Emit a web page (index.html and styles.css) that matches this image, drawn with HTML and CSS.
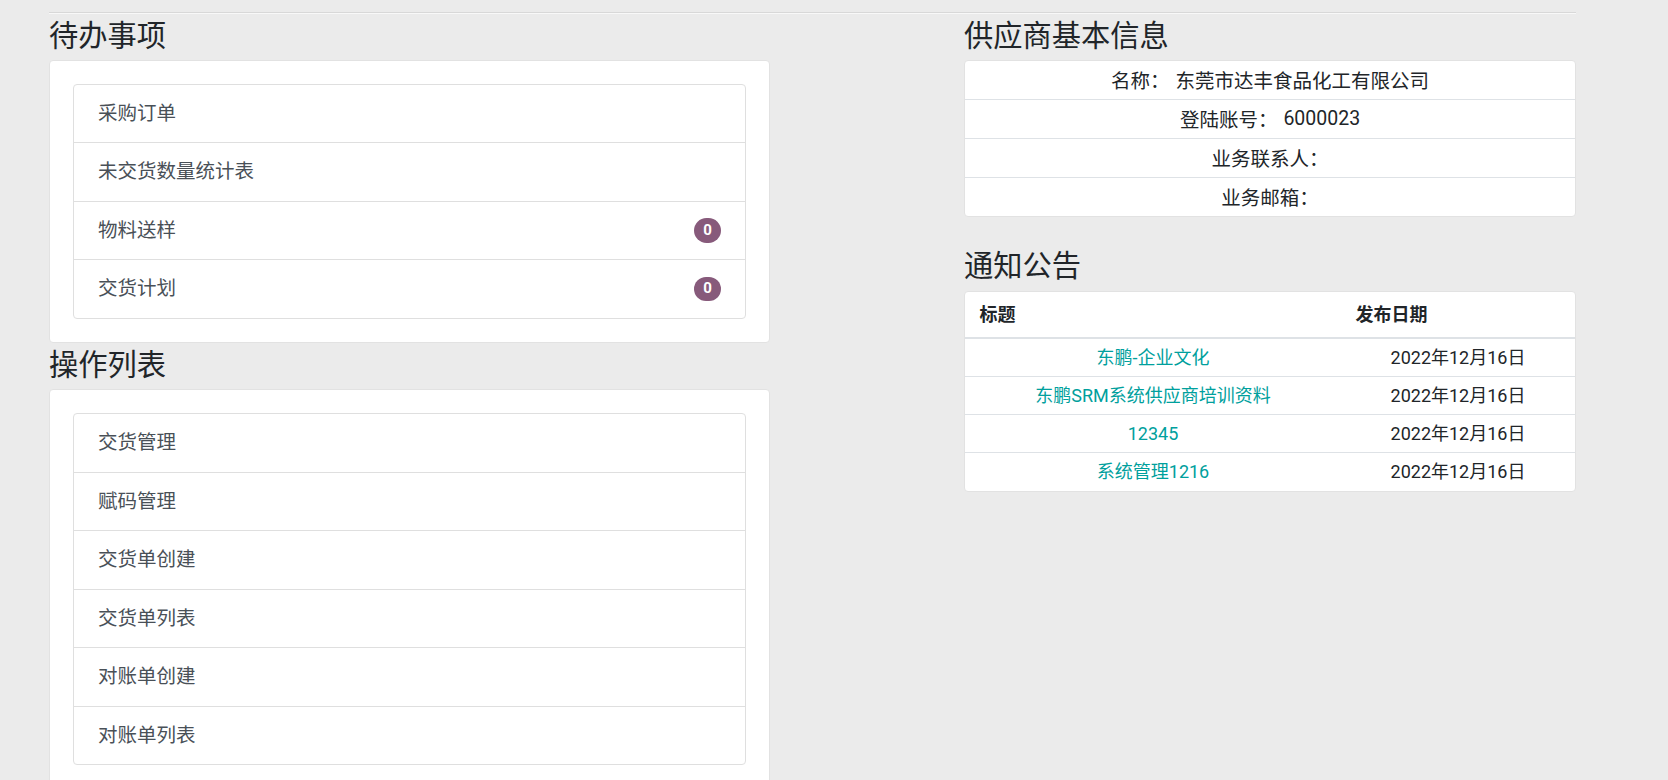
FILE: index.html
```html
<!DOCTYPE html>
<html lang="zh-CN">
<head>
<meta charset="utf-8">
<title>首页</title>
<link rel="stylesheet" href="styles.css">
</head>
<body>
<div class="page">
  <div class="rule"></div>
  <div class="cols">
    <div class="col">
      <h3 class="title">待办事项</h3>
      <div class="card">
        <div class="card-body">
          <div class="list">
            <a class="item">采购订单</a>
            <a class="item">未交货数量统计表</a>
            <a class="item">物料送样<span class="badge">0</span></a>
            <a class="item">交货计划<span class="badge">0</span></a>
          </div>
        </div>
      </div>
      <h3 class="title">操作列表</h3>
      <div class="card">
        <div class="card-body">
          <div class="list">
            <a class="item">交货管理</a>
            <a class="item">赋码管理</a>
            <a class="item">交货单创建</a>
            <a class="item">交货单列表</a>
            <a class="item">对账单创建</a>
            <a class="item">对账单列表</a>
          </div>
        </div>
      </div>
    </div>
    <div class="col">
      <h3 class="title">供应商基本信息</h3>
      <div class="card info-card">
        <div class="info-row">名称：<span class="val">东莞市达丰食品化工有限公司</span></div>
        <div class="info-row">登陆账号：<span class="val">6000023</span></div>
        <div class="info-row">业务联系人：</div>
        <div class="info-row">业务邮箱：</div>
      </div>
      <h3 class="title">通知公告</h3>
      <div class="card table-card">
        <table class="notice">
          <thead>
            <tr><th class="c-title">标题</th><th class="c-date">发布日期</th></tr>
          </thead>
          <tbody>
            <tr><td><a class="link">东鹏-企业文化</a></td><td>2022年12月16日</td></tr>
            <tr><td><a class="link">东鹏SRM系统供应商培训资料</a></td><td>2022年12月16日</td></tr>
            <tr><td><a class="link">12345</a></td><td>2022年12月16日</td></tr>
            <tr><td><a class="link">系统管理1216</a></td><td>2022年12月16日</td></tr>
          </tbody>
        </table>
      </div>
    </div>
  </div>
</div>
</body>
</html>
```
FILE: styles.css
```css
html, body {
  overflow: hidden;
}
body {
  margin: 0;
  background: #ebebeb;
  font-family: Roboto, "Noto Sans CJK SC", sans-serif;
  color: #212529;
}
.page {
  width: 1527px;
  margin-left: 49px;
  padding-top: 12px;
}
.rule {
  border-top: 1px solid #d8d8d8;
  border-bottom: 1px solid #f8f8f8;
}
.cols {
  display: grid;
  grid-template-columns: 721px 612px;
  justify-content: space-between;
  align-items: start;
}
.title {
  font-size: 29.25px;
  line-height: 35px;
  font-weight: 400;
  color: #212529;
  margin: 4.5px 0 6px;
}
.card + .title {
  margin-top: 5.5px;
}
.card {
  background: #fff;
  border: 1px solid #e2e2e2;
  border-radius: 4px;
}
.card-body {
  padding: 23px;
}
.list {
  border: 1px solid #dfdfdf;
  border-radius: 4px;
}
.item {
  display: flex;
  align-items: center;
  justify-content: space-between;
  height: 57.5px;
  padding: 0 24px;
  font-size: 19.5px;
  line-height: 29.25px;
  color: #495057;
  border-top: 1px solid #dfdfdf;
}
.item:first-child {
  border-top: 0;
}
.badge {
  display: inline-flex;
  align-items: center;
  justify-content: center;
  min-width: 27px;
  height: 24.5px;
  padding: 0 6px;
  box-sizing: border-box;
  border-radius: 13px;
  background: #875a7b;
  color: #fff;
  font-size: 15px;
  font-weight: 700;
  line-height: 1;
}
.info-card {
  margin-bottom: 32.5px;
  overflow: hidden;
}
.info-row {
  height: 38px;
  display: flex;
  align-items: center;
  justify-content: center;
  font-size: 19.5px;
  color: #212529;
  border-top: 1px solid #dee2e6;
}
.info-row:first-child {
  border-top: 0;
}
.val {
  margin-left: 6px;
}
.table-card {
  overflow: hidden;
  margin-top: 6.5px;
}
.notice {
  width: 100%;
  border-collapse: collapse;
  font-size: 18px;
  line-height: 27px;
}
.notice th {
  height: 46px;
  padding: 0 14.6px;
  text-align: left;
  font-weight: 700;
  color: #212529;
  border-bottom: 2px solid #dee2e6;
  box-sizing: border-box;
}
.notice .c-title {
  width: 376px;
}
.notice td {
  height: 37px;
  padding: 0 14.6px;
  text-align: center;
  color: #212529;
  border-top: 1px solid #dee2e6;
}
.notice tbody tr:first-child td {
  border-top: 0;
}
.notice tbody tr:last-child td {
  height: 38px;
}
.link {
  color: #00a09d;
  text-decoration: none;
}
```
